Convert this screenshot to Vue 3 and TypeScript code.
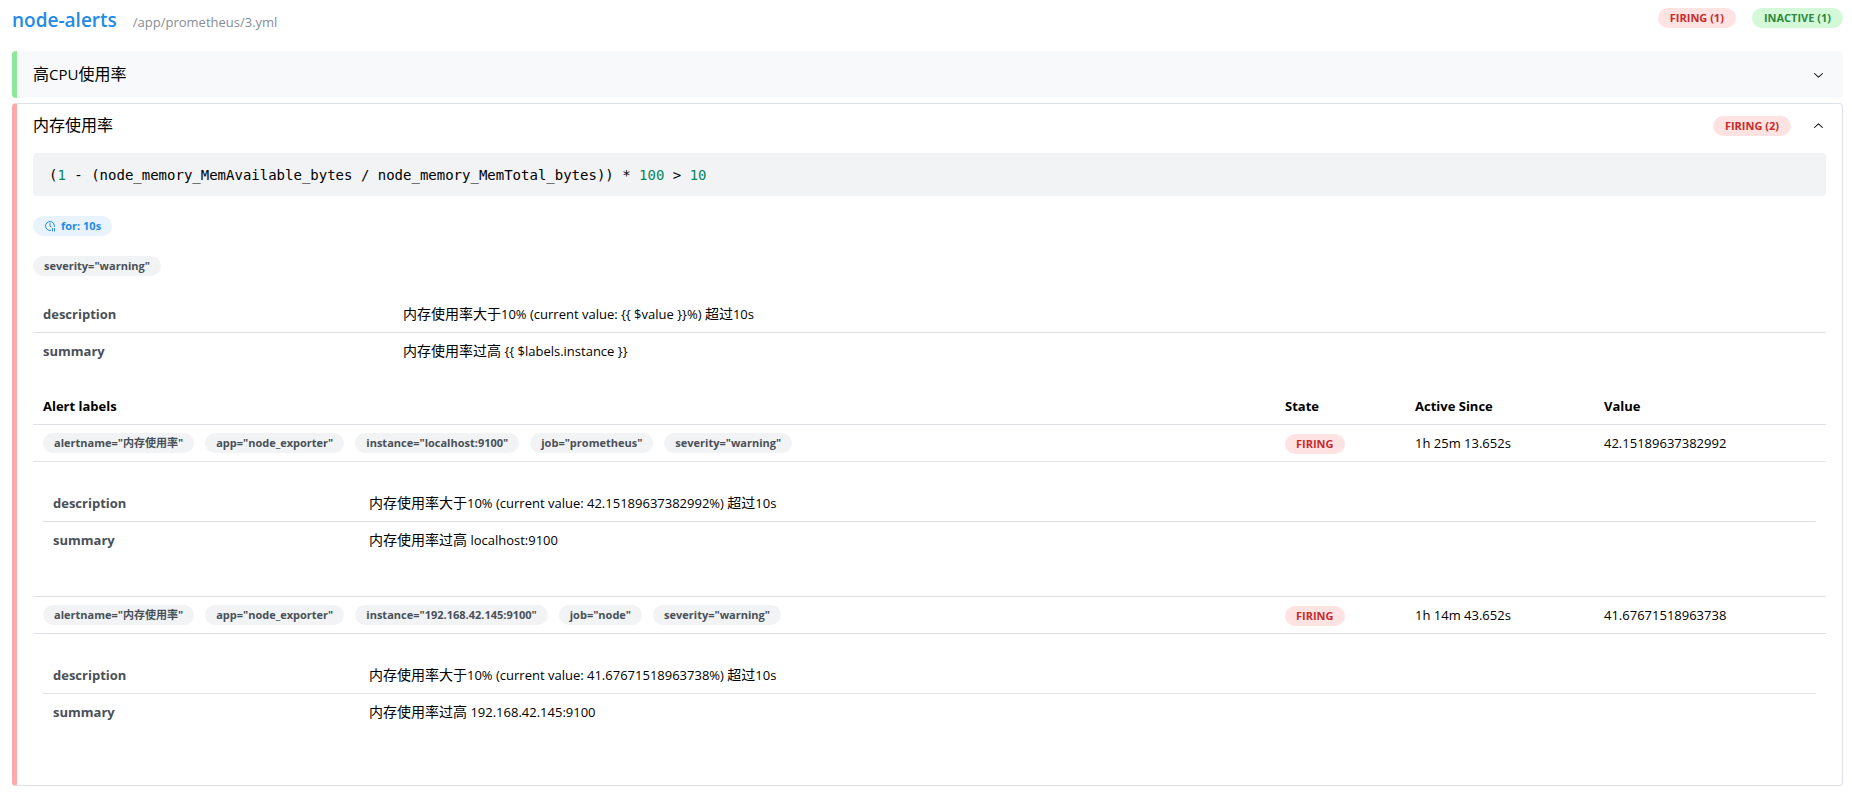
<script setup lang="ts">
import { ref } from 'vue'

interface Annotation { name: string; text: string }
interface ActiveAlert {
  labels: string[]
  state: string
  since: string
  value: string
  annotations: Annotation[]
}

const cpuOpen = ref(false)
const memoryOpen = ref(true)

const ruleAnnotations: Annotation[] = [
  { name: 'description', text: '内存使用率大于10% (current value: {{ $value }}%) 超过10s' },
  { name: 'summary', text: '内存使用率过高 {{ $labels.instance }}' },
]

const alerts: ActiveAlert[] = [
  {
    labels: ['alertname="内存使用率"', 'app="node_exporter"', 'instance="localhost:9100"', 'job="prometheus"', 'severity="warning"'],
    state: 'firing',
    since: '1h 25m 13.652s',
    value: '42.15189637382992',
    annotations: [
      { name: 'description', text: '内存使用率大于10% (current value: 42.15189637382992%) 超过10s' },
      { name: 'summary', text: '内存使用率过高 localhost:9100' },
    ],
  },
  {
    labels: ['alertname="内存使用率"', 'app="node_exporter"', 'instance="192.168.42.145:9100"', 'job="node"', 'severity="warning"'],
    state: 'firing',
    since: '1h 14m 43.652s',
    value: '41.67671518963738',
    annotations: [
      { name: 'description', text: '内存使用率大于10% (current value: 41.67671518963738%) 超过10s' },
      { name: 'summary', text: '内存使用率过高 192.168.42.145:9100' },
    ],
  },
]

const chevron =
  'M3.135 6.158a.5.5 0 0 1 .707-.023L7.5 9.565l3.658-3.43a.5.5 0 0 1 .684.73l-4 3.75a.5.5 0 0 1-.684 0l-4-3.75a.5.5 0 0 1-.023-.707Z'

// Splits text into Han and non-Han runs so each script gets its own size.
function runs(text: string): { text: string; han: boolean }[] {
  return (text.match(/[\u4e00-\u9fff]+|[^\u4e00-\u9fff]+/g) ?? []).map((part) => ({
    text: part,
    han: /[\u4e00-\u9fff]/.test(part),
  }))
}
</script>

<template>
  <main class="group">
    <header class="group-head">
      <div class="group-title">
        <h1>node-alerts</h1>
        <span class="file">/app/prometheus/3.yml</span>
      </div>
      <div class="group-badges">
        <span class="badge count firing">FIRING (1)</span>
        <span class="badge count inactive">INACTIVE (1)</span>
      </div>
    </header>

    <section class="rule ok">
      <button class="rule-head" type="button" :aria-expanded="cpuOpen" @click="cpuOpen = !cpuOpen">
        <span class="rule-name"><span v-for="(r, i) in runs('高CPU使用率')" :key="i" :class="{ han: r.han }">{{ r.text }}</span></span>
        <svg class="chevron" :class="{ up: cpuOpen }" viewBox="0 0 15 15" aria-hidden="true"><path :d="chevron" /></svg>
      </button>
    </section>

    <section class="rule alerting">
      <button class="rule-head" type="button" :aria-expanded="memoryOpen" @click="memoryOpen = !memoryOpen">
        <span class="rule-name"><span class="han">内存使用率</span></span>
        <span class="badge count firing">FIRING (2)</span>
        <svg class="chevron" :class="{ up: memoryOpen }" viewBox="0 0 15 15" aria-hidden="true"><path :d="chevron" /></svg>
      </button>

      <div v-if="memoryOpen" class="rule-body">
        <pre class="expr"><code>(<span class="num">1</span> - (node_memory_MemAvailable_bytes / node_memory_MemTotal_bytes)) * <span class="num">100</span> &gt; <span class="num">10</span></code></pre>

        <div class="badge-row">
          <span class="badge duration">
            <svg viewBox="0 0 24 24" aria-hidden="true">
              <path d="M20.942 13.018a9 9 0 1 0-7.909 7.922" />
              <path d="M12 7v5l2 2" />
              <path d="M17 17v5" />
              <path d="M21 17v5" />
            </svg>
            for: 10s
          </span>
        </div>
        <div class="badge-row">
          <span class="badge label">severity="warning"</span>
        </div>

        <table class="annotations">
          <tbody>
            <tr v-for="a in ruleAnnotations" :key="a.name">
              <th scope="row">{{ a.name }}</th>
              <td><span v-for="(r, i) in runs(a.text)" :key="i" :class="{ han: r.han }">{{ r.text }}</span></td>
            </tr>
          </tbody>
        </table>

        <table class="alerts">
          <thead>
            <tr>
              <th scope="col">Alert labels</th>
              <th scope="col" class="col-state">State</th>
              <th scope="col" class="col-since">Active Since</th>
              <th scope="col" class="col-value">Value</th>
            </tr>
          </thead>
          <tbody v-for="alert in alerts" :key="alert.value">
            <tr>
              <td>
                <div class="labels">
                  <span v-for="l in alert.labels" :key="l" class="badge label"><span v-for="(r, i) in runs(l)" :key="i" :class="{ han: r.han }">{{ r.text }}</span></span>
                </div>
              </td>
              <td><span class="badge firing state">{{ alert.state }}</span></td>
              <td>{{ alert.since }}</td>
              <td>{{ alert.value }}</td>
            </tr>
            <tr>
              <td colspan="4" class="details">
                <table class="annotations nested">
                  <tbody>
                    <tr v-for="a in alert.annotations" :key="a.name">
                      <th scope="row">{{ a.name }}</th>
                      <td><span v-for="(r, i) in runs(a.text)" :key="i" :class="{ han: r.han }">{{ r.text }}</span></td>
                    </tr>
                  </tbody>
                </table>
              </td>
            </tr>
          </tbody>
        </table>
      </div>
    </section>
  </main>
</template>

<style>
body {
  margin: 0;
  background: #fff;
}
</style>

<style scoped>
* {
  box-sizing: border-box;
}

.group {
  padding: 8px 9px 0 12px;
  font-family: "Open Sans", "Noto Sans CJK SC", sans-serif;
  font-size: 13px;
  line-height: 22px;
  color: #000;
}

.group-head {
  display: flex;
  justify-content: space-between;
  align-items: flex-start;
  height: 43px;
}

.group-title {
  display: flex;
  align-items: baseline;
  gap: 16px;
}

h1 {
  margin: 0;
  font-size: 19px;
  line-height: 24px;
  font-weight: 600;
  color: #228be6;
}

.file {
  font-size: 13px;
  color: #868e96;
}

.group-badges {
  display: flex;
  gap: 16px;
}

.badge {
  display: inline-flex;
  align-items: center;
  height: 20px;
  padding: 0 11px;
  border-radius: 10px;
  font-size: 11px;
  line-height: 20px;
  font-weight: 700;
  white-space: nowrap;
}

.badge.count {
  padding: 0 12px;
}

.badge .han {
  font-size: 11px;
}

.firing {
  background: #ffe3e3;
  color: #c92a2a;
}

.inactive {
  background: #d3f9d8;
  color: #2b8a3e;
}

.label {
  background: #f1f3f5;
  color: #495057;
}

.duration {
  gap: 5px;
  background: #e8f3fd;
  color: #228be6;
}

.duration svg {
  width: 12px;
  height: 12px;
  fill: none;
  stroke: currentColor;
  stroke-width: 2;
  stroke-linecap: round;
  stroke-linejoin: round;
}

.state {
  text-transform: uppercase;
  vertical-align: middle;
}

.rule {
  border-left: 5px solid;
  border-radius: 4px;
}

.rule + .rule {
  margin-top: 5px;
}

.ok {
  border-left-color: #8ce99a;
  background: #f8f9fa;
}

.alerting {
  border: 1px solid #dee2e6;
  border-left: 5px solid #ffa8a8;
}

.rule-head {
  display: flex;
  align-items: center;
  gap: 20px;
  width: 100%;
  height: 47px;
  padding: 0 17px 0 16px;
  border: 0;
  background: none;
  font: inherit;
  color: inherit;
  text-align: left;
  cursor: pointer;
}

.alerting .rule-head {
  height: 44px;
  padding-right: 16px;
}

.rule-name {
  flex: 1;
  padding-bottom: 2px;
  font-size: 15px;
}

.rule-name .han {
  font-size: 16px;
}

.han {
  font-size: 14px;
}

.chevron {
  width: 15px;
  height: 15px;
  fill: #000;
}

.chevron.up {
  transform: rotate(180deg);
}

.rule-body {
  padding: 5px 16px 16px;
}

.expr {
  margin: 0 0 20px;
  padding: 12px 16px 10px;
  border-radius: 4px;
  background: #f1f3f5;
  font-size: 14px;
  line-height: 21px;
}

.expr code {
  font-family: "DejaVu Sans Mono", monospace;
}

.num {
  color: #098658;
}

.badge-row {
  display: flex;
  margin-bottom: 20px;
}

table {
  width: 100%;
  border-collapse: separate;
  border-spacing: 0;
  table-layout: fixed;
}

th,
td {
  height: 37px;
  padding: 0 10px;
  border-bottom: 1px solid #dee2e6;
  text-align: left;
  font-weight: 400;
  line-height: 20px;
  vertical-align: middle;
}

th {
  font-weight: 700;
}

.annotations th {
  width: 360px;
  color: #495057;
}

.annotations.nested th {
  width: 316px;
}

.annotations tr:last-child th,
.annotations tr:last-child td {
  height: 35px;
  border-bottom: 0;
}

.alerts {
  margin-top: 20px;
}

.col-state {
  width: 130px;
}

.col-since {
  width: 189px;
}

.col-value {
  width: 232px;
}

.labels {
  display: flex;
  gap: 11px;
}

.alerts td.details {
  padding: 23px 10px 39px;
}

.alerts > tbody:last-child > tr:last-child > td.details {
  border-bottom-color: transparent;
}
</style>
